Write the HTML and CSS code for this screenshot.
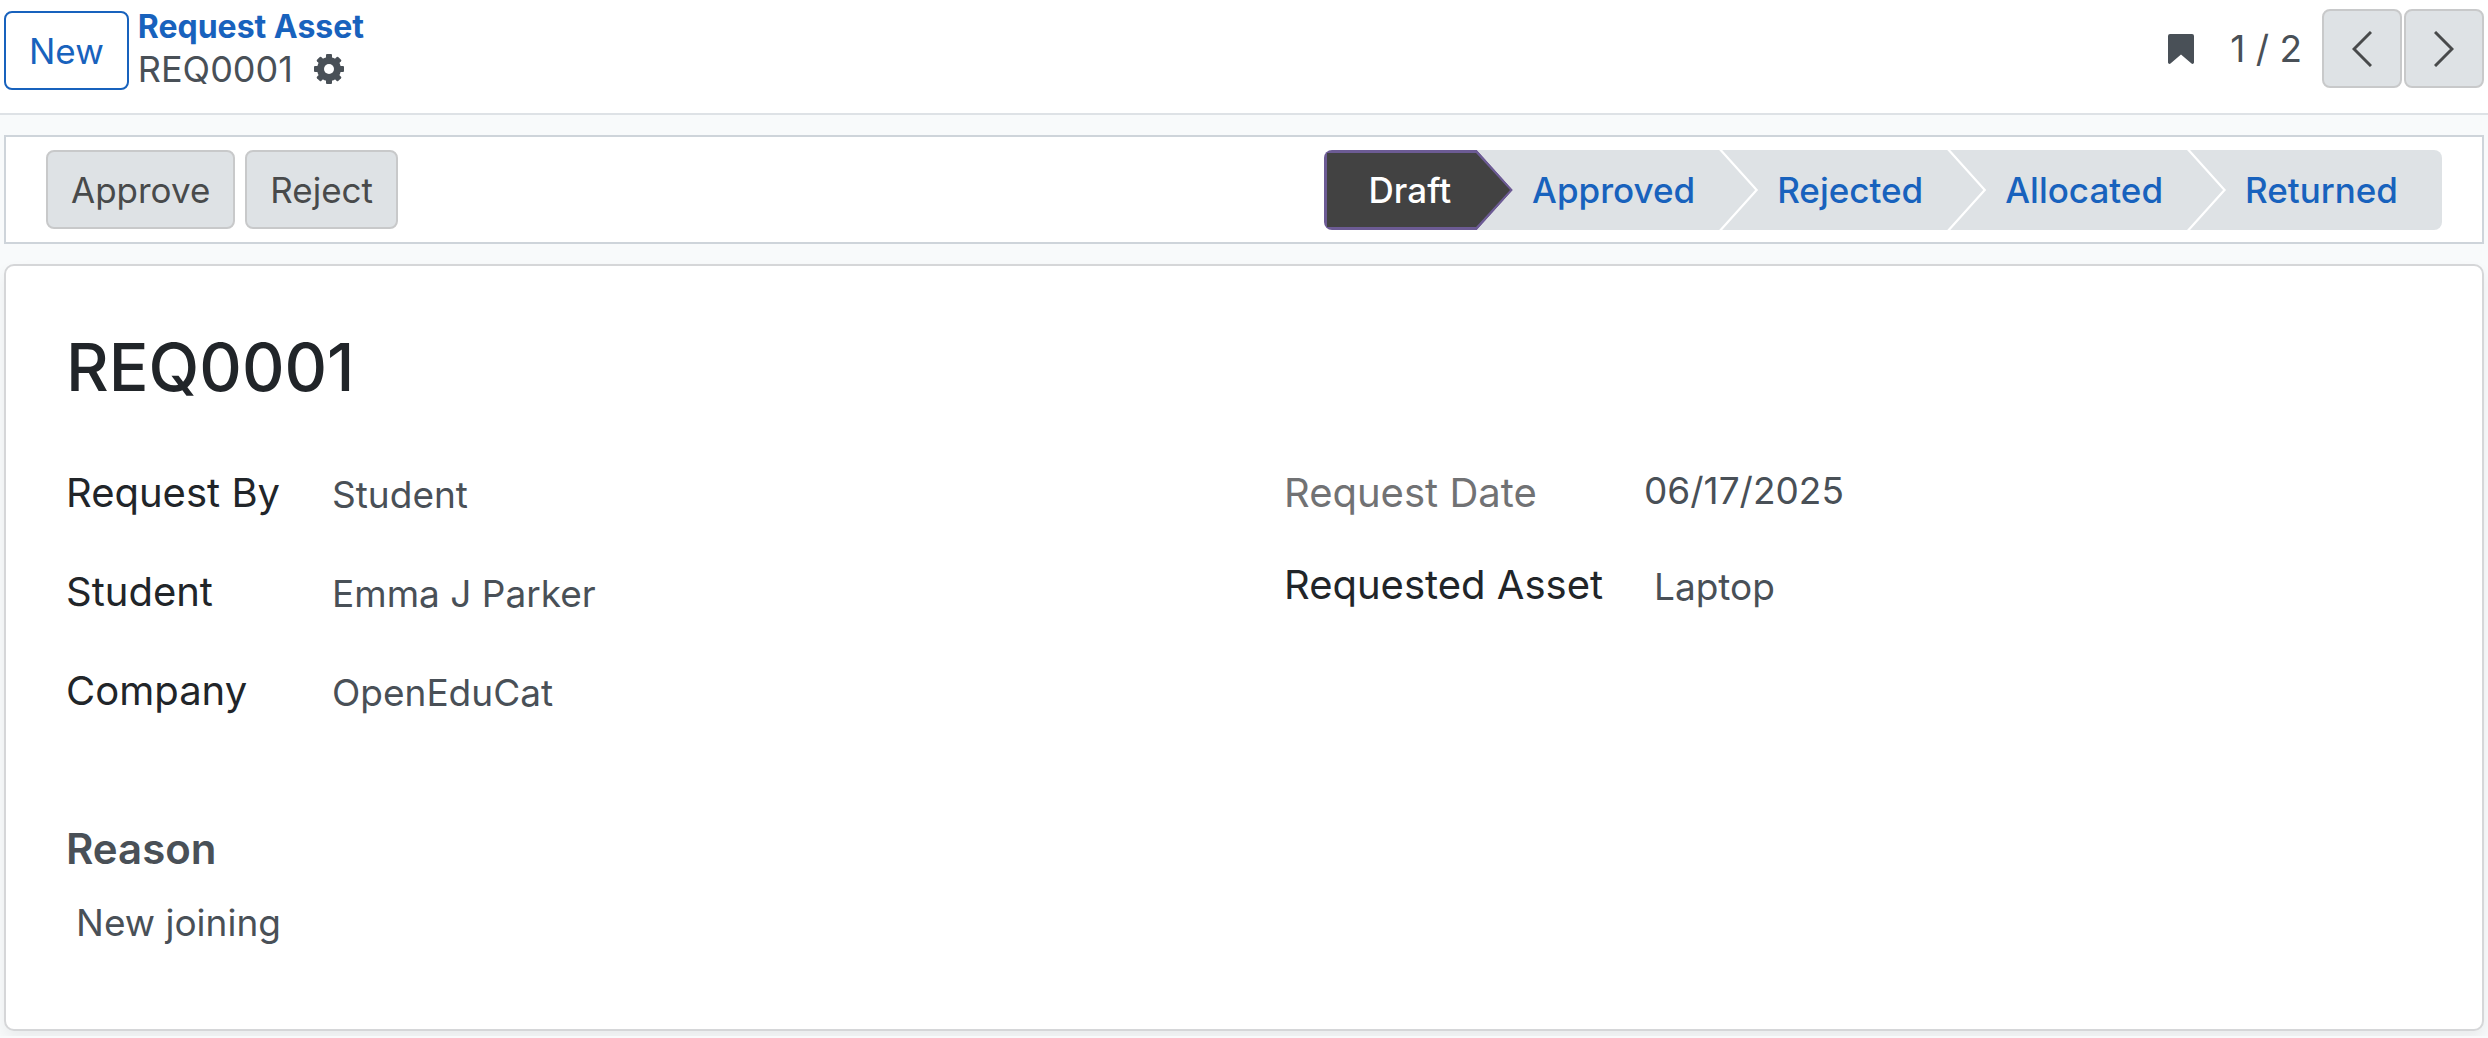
FILE: index.html
```html
<!DOCTYPE html>
<html lang="en">
<head>
  <meta charset="UTF-8">
  <meta name="viewport" content="width=device-width, initial-scale=1.0">
  <title>REQ0001 - Request Asset</title>
  <link rel="stylesheet" href="styles.css">
</head>
<body>
  <header class="control-panel">
    <button type="button" class="btn btn-outline">New</button>
    <nav class="breadcrumb">
      <a href="#" class="breadcrumb-parent">Request Asset</a>
      <div class="breadcrumb-current">
        <span>REQ0001</span>
        <button type="button" class="btn-icon" aria-label="Actions">
          <svg width="32" height="32" viewBox="-16 -16 32 32">
            <g fill="currentColor">
              <rect x="-3" y="-15" width="6" height="30" rx="1"/>
              <rect x="-3" y="-15" width="6" height="30" rx="1" transform="rotate(45)"/>
              <rect x="-3" y="-15" width="6" height="30" rx="1" transform="rotate(90)"/>
              <rect x="-3" y="-15" width="6" height="30" rx="1" transform="rotate(135)"/>
              <circle r="12"/>
            </g>
            <circle r="5" fill="#fff"/>
          </svg>
        </button>
      </div>
    </nav>
    <div class="pager">
      <button type="button" class="btn-icon" aria-label="Bookmark">
        <svg width="26" height="30" viewBox="0 0 26 30">
          <path fill="currentColor" d="M2 0h22a2 2 0 0 1 2 2v26.500a1.500 1.500 0 0 1-2.500 1L13 20.500 2.500 29.500A1.500 1.500 0 0 1 0 28.500V2a2 2 0 0 1 2-2z"/>
        </svg>
      </button>
      <span class="pager-value">1 / 2</span>
      <div class="pager-buttons">
        <button type="button" class="btn btn-secondary btn-square" aria-label="Previous">
          <svg width="20" height="36" viewBox="0 0 20 36"><path d="M19 1L2 18l17 17" fill="none" stroke="currentColor" stroke-width="3"/></svg>
        </button>
        <button type="button" class="btn btn-secondary btn-square" aria-label="Next">
          <svg width="20" height="36" viewBox="0 0 20 36"><path d="M1 1l17 17L1 35" fill="none" stroke="currentColor" stroke-width="3"/></svg>
        </button>
      </div>
    </div>
  </header>

  <main class="form-view">
    <div class="statusbar">
      <div class="statusbar-buttons">
        <button type="button" class="btn btn-secondary">Approve</button>
        <button type="button" class="btn btn-secondary">Reject</button>
      </div>
      <div class="steps">
        <button type="button" class="step step-active"><span>Draft</span></button>
        <button type="button" class="step">Approved</button>
        <button type="button" class="step">Rejected</button>
        <button type="button" class="step">Allocated</button>
        <button type="button" class="step">Returned</button>
      </div>
    </div>

    <section class="sheet">
      <h1>REQ0001</h1>
      <div class="groups">
        <dl class="group">
          <dt>Request By</dt>
          <dd>Student</dd>
          <dt>Student</dt>
          <dd>Emma J Parker</dd>
          <dt>Company</dt>
          <dd>OpenEduCat</dd>
        </dl>
        <dl class="group group-right">
          <dt class="muted">Request Date</dt>
          <dd class="date">06/17/2025</dd>
          <dt>Requested Asset</dt>
          <dd>Laptop</dd>
        </dl>
      </div>
      <h2>Reason</h2>
      <p class="reason">New joining</p>
    </section>
  </main>
</body>
</html>
```

FILE: styles.css
```css
* {
  box-sizing: border-box;
}
body {
  margin: 0;
  font-family: Inter, Roboto, sans-serif;
  font-size: 37px;
  line-height: 44px;
  color: #495057;
  background-color: #f8fafb;
}
button {
  font: inherit;
  cursor: pointer;
}
svg {
  display: block;
}

/* Top bar */
.control-panel {
  display: flex;
  align-items: flex-start;
  height: 115px;
  padding: 9px 4px 0;
  background-color: #fff;
  border-bottom: 2px solid #dee2e6;
}
.btn {
  height: 79px;
  padding: 0 23px;
  border: 2px solid;
  border-radius: 8px;
  font-size: 35px;
}
.btn-outline {
  margin-top: 2px;
  color: #1862bd;
  background-color: #fff;
  border-color: #1862bd;
}
.btn-secondary {
  color: #484a4b;
  background-color: #dee2e5;
  border-color: #c8c9ca;
}
.btn-square {
  display: flex;
  align-items: center;
  justify-content: center;
  width: 80px;
  padding: 0;
}
.btn-icon {
  padding: 0;
  border: none;
  background: none;
  color: #495057;
}
.breadcrumb {
  margin-left: 9px;
}
.breadcrumb-parent {
  display: block;
  font-size: 32px;
  line-height: 36px;
  font-weight: 700;
  color: #1862bd;
  text-decoration: none;
}
.breadcrumb-current {
  display: flex;
  align-items: center;
  gap: 20px;
  font-size: 36px;
  line-height: 48px;
}
.pager {
  display: flex;
  align-items: center;
  margin-left: auto;
}
.pager-value {
  margin: 0 20px 0 36px;
}
.pager-buttons {
  display: flex;
  gap: 2px;
}

/* Status bar */
.form-view {
  padding: 20px 4px 5px;
}
.statusbar {
  display: flex;
  justify-content: space-between;
  padding: 13px 40px 12px;
  background-color: #fff;
  border: 2px solid #ced4da;
}
.statusbar-buttons {
  display: flex;
  gap: 10px;
}
.steps {
  display: flex;
  border-radius: 8px;
  overflow: hidden;
}
.step {
  height: 80px;
  margin-left: -33px;
  padding: 0 60px 0 55px;
  border: none;
  font-size: 35px;
  font-weight: 500;
  color: #1862bd;
  background-color: #dee2e5;
  clip-path: polygon(0 0, calc(100% - 36px) 0, 100% 50%, calc(100% - 36px) 100%, 0 100%, 36px 50%);
}
.step:last-child {
  padding-right: 44px;
  clip-path: polygon(0 0, 100% 0, 100% 100%, 0 100%, 36px 50%);
}
/* the outline is the button itself, the dark fill sits inside it */
.step-active {
  margin-left: 0;
  padding: 3px;
  color: #fff;
  background-color: #6c5b94;
  clip-path: polygon(0 0, calc(100% - 36px) 0, 100% 50%, calc(100% - 36px) 100%, 0 100%);
}
.step-active span {
  display: flex;
  align-items: center;
  height: 100%;
  padding: 0 59px 0 42px;
  background-color: #424242;
  clip-path: polygon(0 0, calc(100% - 34px) 0, 100% 50%, calc(100% - 34px) 100%, 0 100%);
}
.step-active + .step {
  margin-left: -36px;
}

/* Sheet */
.sheet {
  margin-top: 20px;
  padding: 59px 60px 84px;
  background-color: #fff;
  border: 2px solid #d5d6d8;
  border-radius: 10px;
  box-shadow: 0 8px 16px rgba(0, 0, 0, 0.06);
}
h1 {
  margin: 0 0 60px;
  font-size: 66px;
  line-height: 84px;
  font-weight: 500;
  color: #212529;
}
.groups {
  display: grid;
  grid-template-columns: 1fr 1fr;
  gap: 80px;
}
.group {
  display: grid;
  grid-template-columns: 266px 1fr;
  align-content: start;
  row-gap: 47px;
  margin: 0;
}
.group-right {
  grid-template-columns: 370px 1fr;
  row-gap: 44px;
}
dt {
  font-size: 40px;
  line-height: 48px;
  color: #212529;
}
dd {
  margin: 0;
  line-height: 52px;
}
.muted {
  color: #717274;
}
dd.date {
  margin-left: -10px;
  line-height: 44px;
}
h2 {
  margin: 106px 0 28px;
  font-size: 42px;
  line-height: 48px;
  font-weight: 600;
}
.reason {
  margin: 0;
  padding-left: 10px;
}
```
